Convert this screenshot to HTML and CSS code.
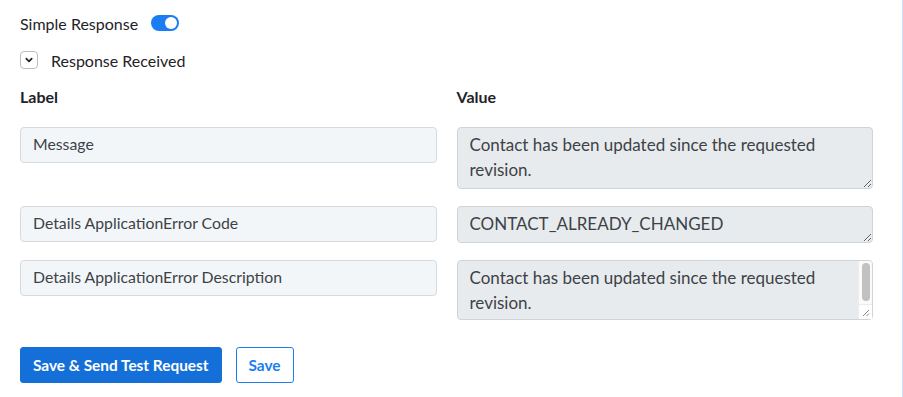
FILE: index.html
```html
<!DOCTYPE html>
<html lang="en">
<head>
  <meta charset="UTF-8">
  <title>Response Mapping</title>
  <link rel="stylesheet" href="styles.css">
</head>
<body>

<main class="panel">
  <div class="switch-row">
    <span>Simple Response</span>
    <span class="toggle"><span class="knob"></span></span>
  </div>

  <div class="collapse-row">
    <span class="chevron">
      <svg width="10" height="10" viewBox="0 0 10 10"><path d="M2.3 3.6 5 6.3 7.7 3.6" fill="none" stroke="#222" stroke-width="1.7" stroke-linecap="round" stroke-linejoin="round"/></svg>
    </span>
    <span>Response Received</span>
  </div>

  <div class="grid">
    <div class="head">Label</div>
    <div class="head">Value</div>

    <input class="label-field" type="text" value="Message" readonly>
    <textarea class="value-field tall" readonly>Contact has been updated since the requested revision.</textarea>

    <input class="label-field" type="text" value="Details ApplicationError Code" readonly>
    <textarea class="value-field short" readonly>CONTACT_ALREADY_CHANGED</textarea>

    <input class="label-field" type="text" value="Details ApplicationError Description" readonly>
    <div class="scroll-wrap">
      <textarea class="value-field scroll" readonly>Contact has been updated since the requested revision.</textarea>
      <!-- scrollbar drawn over the textarea -->
      <div class="fake-bar">
        <span class="thumb"></span>
        <span class="corner">
          <svg width="8" height="8" viewBox="0 0 8 8"><path d="M7 1 1 7M7 4.5 4.5 7" stroke="#888" stroke-width="1"/></svg>
        </span>
      </div>
    </div>
  </div>

  <div class="actions">
    <button class="btn primary">Save &amp; Send Test Request</button>
    <button class="btn outline">Save</button>
  </div>
</main>

</body>
</html>
```

FILE: styles.css
```css
:root {
  --text: #3d4247;
  --blue: #1470d8;
}
* { box-sizing: border-box; margin: 0; padding: 0; }
html, body { height: 100%; }
body {
  font-family: Lato, "Liberation Sans", sans-serif;
  color: #1f2328;
  background: #fff;
  border-right: 1px solid #cddff8;
}

.panel { padding: 12px 29px 0 20px; }

/* ——— top toggles ——— */
.switch-row {
  display: flex;
  align-items: center;
  gap: 13px;
  height: 22px;
  font-size: 16px;
}
.toggle {
  width: 28px;
  height: 16px;
  border-radius: 8px;
  background: #1a7ef2;
  display: flex;
  align-items: center;
  justify-content: flex-end;
  padding: 0 2px;
}
.knob { width: 12px; height: 12px; border-radius: 50%; background: #fff; }

.collapse-row {
  display: flex;
  align-items: center;
  gap: 13px;
  margin-top: 17px;
  height: 18px;
  font-size: 16px;
}
.chevron {
  width: 18px;
  height: 18px;
  border: 1px solid #b9bec4;
  border-radius: 4px;
  display: flex;
  align-items: center;
  justify-content: center;
}

/* ——— label / value grid ——— */
.grid {
  display: grid;
  grid-template-columns: 1fr 1fr;
  column-gap: 20px;
  row-gap: 17px;
  align-items: start;
  margin-top: 18px;
}
.head { font-weight: 700; font-size: 16px; height: 19px; margin-bottom: 4px; }

.label-field,
.value-field {
  font-family: inherit;
  color: var(--text);
  border-radius: 4px;
  width: 100%;
  outline: none;
}
.label-field {
  font-size: 15.8px;
  height: 36px;
  padding: 0 12px 3px;
  background: #f3f6f9;
  border: 1px solid #d5dae0;
}
.value-field {
  display: block;
  font-size: 17px;
  line-height: 25px;
  padding: 4px 12px;
  background: #e8ebee;
  border: 1px solid #cfd4d9;
  resize: vertical;
}
.value-field.tall { height: 62px; }
.value-field.short { height: 37px; padding-top: 4px; }
.value-field.scroll { height: 60px; padding-right: 28px; }

.scroll-wrap { position: relative; }
.fake-bar {
  position: absolute;
  top: 1px;
  right: 1px;
  bottom: 1px;
  width: 14px;
  background: #fafafa;
  border-left: 1px solid #ededed;
  border-radius: 0 3px 3px 0;
  display: flex;
  flex-direction: column;
  align-items: center;
}
.thumb {
  width: 8px;
  height: 38px;
  margin-top: 2px;
  border-radius: 4px;
  background: #c1c1c1;
}
.corner {
  margin-top: auto;
  width: 100%;
  height: 15px;
  border-top: 1px solid #ececec;
  background: #fff;
  display: flex;
  align-items: flex-end;
  justify-content: flex-end;
  padding: 0 2px 2px 0;
}

/* ——— buttons ——— */
.actions { display: flex; gap: 14px; margin-top: 27px; }
.btn {
  height: 36px;
  font-family: inherit;
  font-size: 15.4px;
  font-weight: 700;
  border-radius: 3px;
  padding: 0 12px;
}
.primary { background: var(--blue); color: #fff; border: 1px solid var(--blue); }
.outline { background: #fff; color: #1a7ef2; border: 1px solid #1a7ef2; width: 58px; padding: 0; }
```
